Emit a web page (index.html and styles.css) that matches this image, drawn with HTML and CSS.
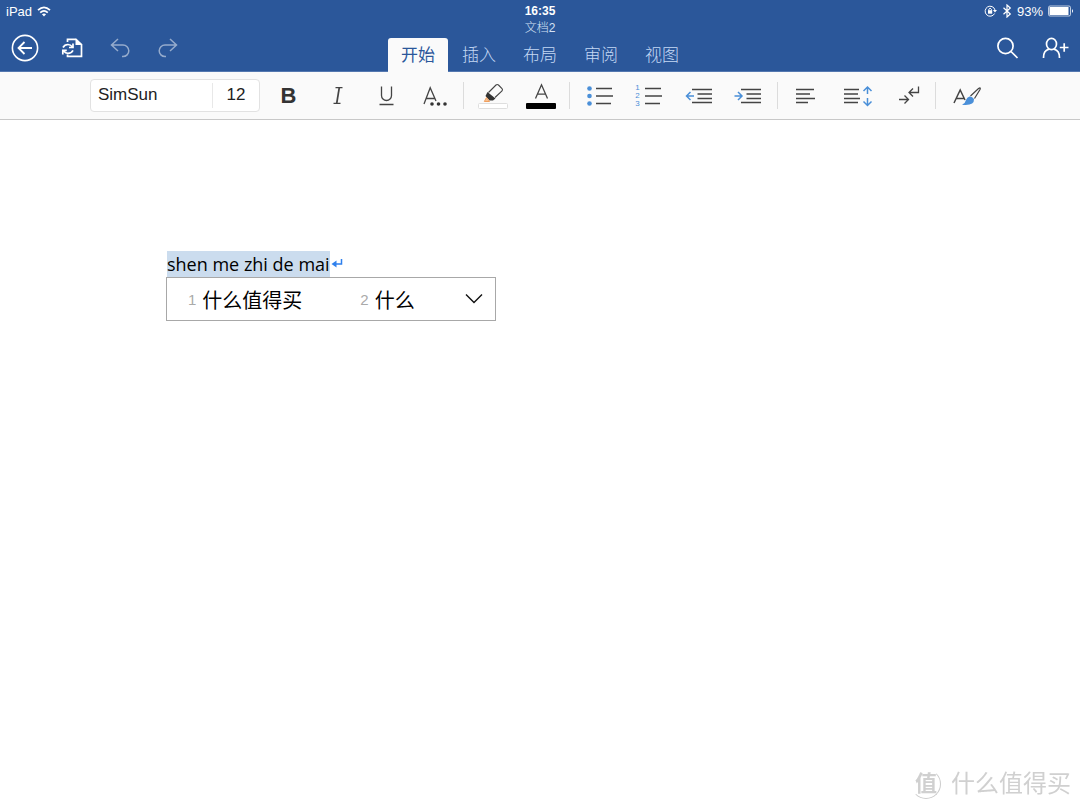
FILE: index.html
```html
<!DOCTYPE html>
<html lang="zh-CN">
<head>
<meta charset="utf-8">
<meta name="viewport" content="width=device-width, initial-scale=1">
<title>文档2</title>
<link rel="stylesheet" href="styles.css">
</head>
<body>
<header class="header">
  <div class="side">
    <div class="status">
      <span>iPad</span>
      <svg width="14" height="11" viewBox="0 0 14 11" fill="none" stroke="#fff" stroke-width="1.7"><path d="M1 4.2Q7-1.6 13 4.2M3.2 6.6Q7 3 10.800 6.600"/><path d="M7 10.500L4.900 8.300Q7 6.500 9.100 8.300Z" fill="#fff" stroke="none"/></svg>
    </div>
    <div class="actions">
      <button class="action" aria-label="返回"><svg width="28" height="28" viewBox="0 0 28 28" fill="none" stroke="#fff" stroke-width="1.6"><circle cx="14" cy="14" r="12.600"/><path d="M21 14H8M13.500 8L7.500 14L13.500 20" stroke-width="1.800"/></svg></button>
      <button class="action" aria-label="文件"><svg width="24" height="24" viewBox="0 0 24 24" fill="none" stroke="#fff" stroke-width="1.700"><path d="M6.500 6V3.300H15L20.500 8.500V20.300H6.500V18.500"/><path d="M14.500 2.500V9H21.300Z" fill="#fff" stroke="none"/><path d="M2 11.500Q3.500 8.500 7 8.500Q9.500 8.500 11.500 11M12 7.500V11.500H8M12 14.300Q10.500 17.300 7 17.300Q4.500 17.300 2.500 15M1.800 18.500V14.400H5.800"/></svg></button>
      <button class="action faded" aria-label="撤消"><svg width="22" height="22" viewBox="0 0 22 22" fill="none" stroke="#fff" stroke-width="1.500"><path d="M8 2L1.500 8L8 14M1.500 8H13A5.600 5.600 0 0 1 13 19.600H12"/></svg></button>
      <button class="action faded" aria-label="恢复"><svg width="22" height="22" viewBox="0 0 22 22" fill="none" stroke="#fff" stroke-width="1.500"><path d="M12 2L18.500 8L12 14M18.500 8H7A5.600 5.600 0 0 0 7 19.600H8"/></svg></button>
    </div>
  </div>
  <div class="middle">
    <div class="time">16:35</div>
    <div class="name">文档2</div>
    <nav class="tabs">
      <button class="tab active">开始</button>
      <button class="tab">插入</button>
      <button class="tab">布局</button>
      <button class="tab">审阅</button>
      <button class="tab">视图</button>
    </nav>
  </div>
  <div class="side right">
    <div class="status">
      <svg width="13" height="12" viewBox="0 0 13 12" fill="none" stroke="#fff"><path d="M10.600 8.500A5 5 0 1 1 11 5"/><path d="M8.900 5H13L11 7.500Z" fill="#fff" stroke="none"/><path d="M4 5.200H8.200V8.700H4Z" fill="#fff" stroke="none"/><path d="M4.800 5.500V4.300Q6.100 2 7.400 4.300V5.500"/></svg>
      <svg width="10" height="14" viewBox="0 0 10 14" fill="none" stroke="#fff" stroke-width="1.200"><path d="M1.500 3.800L8.300 10L5 13V1L8.300 4L1.500 10.200"/></svg>
      <span>93%</span>
      <svg width="26" height="12" viewBox="0 0 26 12"><rect x=".5" y="1" width="22" height="10" rx="1.500" fill="none" stroke="#fff" stroke-opacity=".7"/><rect x="1.500" y="2" width="19" height="8" fill="#fff"/><path d="M24 4Q26 6 24 8Z" fill="#fff"/></svg>
    </div>
    <div class="actions">
      <button class="action" aria-label="搜索"><svg width="24" height="24" viewBox="0 0 24 24" fill="none" stroke="#fff" stroke-width="1.700"><circle cx="10.500" cy="10" r="7.600"/><path d="M16 15.500L22.500 22"/></svg></button>
      <button class="action" aria-label="共享"><svg width="28" height="24" viewBox="0 0 28 24" fill="none" stroke="#fff" stroke-width="1.700"><ellipse cx="10.500" cy="8" rx="5" ry="5.700"/><path d="M2.500 22Q2.300 14.500 8 13.200M18.500 22Q18.700 14.500 13 13.200M18.800 11.500H27.500M23.200 7.200V15.800"/></svg></button>
    </div>
  </div>
</header>

<div class="toolbar" role="toolbar" aria-label="开始">
  <div class="font">
    <button class="font-name">SimSun</button>
    <button class="font-size">12</button>
  </div>
  <div class="group">
    <button class="tool bold" aria-label="加粗">B</button>
    <button class="tool" aria-label="倾斜"><svg class="ico" viewBox="0 0 32 32"><path d="M13.500 7.700H20.500M11.500 23.300H18.500" stroke-width="1.200"/><path d="M17.300 7.500L14.700 23.500" stroke-width="1.700"/></svg></button>
    <button class="tool" aria-label="下划线"><svg class="ico" viewBox="0 0 32 32"><path d="M10.500 6.500V15.500A5 5 0 0 0 20.500 15.500V6.500M8.500 24.500H22.500" stroke-width="1.300"/></svg></button>
    <button class="tool" aria-label="更多格式"><svg class="ico" viewBox="0 0 32 32"><path d="M4 24L10.200 7.700L16 21M6.300 18.500H14.700" stroke-width="1.300"/><g fill="#333" stroke="none"><circle cx="12" cy="24" r="1.800"/><circle cx="18.500" cy="24" r="1.800"/><circle cx="25" cy="24" r="1.800"/></g></svg></button>
  </div>
  <div class="group">
    <button class="tool" aria-label="突出显示"><svg class="ico" viewBox="0 0 32 32"><path d="M11.500 12.500L19 5Q20.200 4 21.500 5L25 8.500Q26 9.700 25 11L18 17.500" stroke-width="1.100"/><path d="M10.500 12L18.500 18.500L16 20.500L12.500 20.500L8.500 16Z" fill="#333" stroke="none"/><path d="M9.500 17.500L7.300 21.500H12.500Z" fill="#f8c090" stroke="#f0a060" stroke-width="1"/><rect x="1.500" y="23.500" width="29" height="5" rx="1" fill="#fff" stroke="#dedede" stroke-width="1"/></svg></button>
    <button class="tool" aria-label="字体颜色"><svg class="ico" viewBox="0 0 32 32"><path d="M9.500 18.500L15.500 4.800L21.500 18.500M11.500 14.200H19.500" stroke-width="1.300"/><rect x="0" y="23" width="30" height="6" rx="1" fill="#000" stroke="none"/></svg></button>
  </div>
  <div class="group wide">
    <button class="tool" aria-label="项目符号"><svg class="ico" viewBox="0 0 32 32"><g fill="#4a8fd8" stroke="none"><circle cx="6.500" cy="8.500" r="2.300"/><circle cx="6.500" cy="16" r="2.300"/><circle cx="6.500" cy="23.500" r="2.300"/></g><path d="M13 8.500H29M13 16H30M13 23.500H28"/></svg></button>
    <button class="tool numbers" aria-label="编号"><span class="digits"><span>1</span><span>2</span><span>3</span></span><svg width="18" height="32" viewBox="0 0 18 32"><path d="M0 8.500H16M0 16H17M0 23.500H15"/></svg></button>
    <button class="tool" aria-label="减少缩进"><svg class="ico" viewBox="0 0 32 32"><path d="M9 9.500H29M14.500 14H29M14.500 18.500H29M9 22.500H29"/><path class="blue" d="M11 16H3.500M7.500 12L3.500 16L7.500 20"/></svg></button>
    <button class="tool" aria-label="增加缩进"><svg class="ico" viewBox="0 0 32 32"><path d="M8 9.500H28M13.500 14H28M13.500 18.500H28M8 22.500H28"/><path class="blue" d="M1.500 16H9M5 12L9 16L5 20"/></svg></button>
  </div>
  <div class="group wide">
    <button class="tool" aria-label="对齐"><svg class="ico" viewBox="0 0 32 32"><path d="M5 9.500H23M5 14H19M5 18.500H24M5 22.500H17"/></svg></button>
    <button class="tool" aria-label="行距"><svg class="ico" viewBox="0 0 32 32"><path d="M3 9.500H18M3 14H17M3 18.500H19M3 22.500H17"/><path class="blue" d="M26.500 14V7M22.500 11L26.500 7L30.500 11M26.500 18V25.500M22.500 21.500L26.500 25.500L30.500 21.500"/></svg></button>
    <button class="tool" aria-label="段落标记"><svg class="ico" viewBox="0 0 32 32"><path d="M8 19.500H17.500M13.500 15.500L17.500 19.500L13.500 23.500M27.500 6.500V12.500H18M22 8.500L18 12.500L22 16.500" stroke-width="1.300"/></svg></button>
  </div>
  <div class="group wide">
    <button class="tool" aria-label="样式"><svg class="ico" viewBox="0 0 32 32"><path d="M5 23L11.200 10L16 20M7.300 18.500H15"/><path d="M21.500 16L29.500 8.500Q32 7 31 9.500L25.500 18.500" stroke-width="1.200"/><path d="M20.500 16.500Q23 16 25 19Q25.500 26 13 24.700Q16.500 23 17 20Q18 17 20.500 16.500Z" fill="#4a8fd8" stroke="none"/></svg></button>
  </div>
</div>

<main class="page">
  <p class="line"><span class="composing">shen me zhi de mai</span><svg width="12" height="12" viewBox="0 0 12 12" fill="none" stroke="#2f80ed" stroke-width="1.500"><path d="M10.500 1V6H4"/><path d="M0.500 6L5.500 2.500V9.500Z" fill="#2f80ed" stroke="none"/></svg></p>
  <div class="candidates">
    <button class="candidate"><span class="index">1</span>什么值得买</button>
    <button class="candidate"><span class="index">2</span>什么</button>
    <button class="more" aria-label="更多候选"><svg width="18" height="12" viewBox="0 0 18 12" fill="none" stroke="#111" stroke-width="1.400"><path d="M1 1.500L9 9.500L17 1.500"/></svg></button>
  </div>
</main>

<div class="watermark"><span class="seal">值</span><span>什么值得买</span></div>
</body>
</html>
```
FILE: styles.css
```css
* { box-sizing: border-box; }

body {
  margin: 0;
  min-height: 100vh;
  display: flex;
  flex-direction: column;
  background: #fff;
  color: #000;
  font-family: "Liberation Sans", "Noto Sans CJK SC", sans-serif;
}

button {
  margin: 0;
  padding: 0;
  border: 0;
  background: none;
  color: inherit;
  font: inherit;
}

svg { display: block; flex: none; }

.header {
  display: grid;
  grid-template-columns: 1fr auto 1fr;
  background: #2b579a;
  border-bottom: 1px solid #5478b0;
  color: #fff;
}

.side { padding: 0 6px; }

.status {
  display: flex;
  align-items: center;
  gap: 5px;
  height: 22px;
  font-size: 13px;
}

.actions {
  display: flex;
  align-items: center;
  gap: 10px;
  height: 49px;
  padding-top: 3px;
}

.action {
  display: grid;
  place-items: center;
  width: 38px;
  height: 38px;
}

.faded { opacity: .5; }

.right .status, .right .actions { justify-content: flex-end; }

.middle {
  display: flex;
  flex-direction: column;
  align-items: center;
}

.time {
  padding-top: 3px;
  font-size: 12px;
  font-weight: bold;
  line-height: 16px;
}

.name {
  color: #d5e2f5;
  font-size: 12px;
  font-weight: 300;
  line-height: 18px;
}

.tabs {
  display: flex;
  gap: 1px;
  margin-top: auto;
  margin-bottom: -1px;
}

.tab {
  width: 60px;
  height: 34px;
  padding-bottom: 3px;
  border-radius: 3px 3px 0 0;
  color: #c5d9f5;
  font-size: 17px;
  font-weight: 300;
}

.active {
  background: #fafafa;
  color: #2b579a;
  font-weight: 400;
}

.toolbar {
  display: flex;
  align-items: center;
  height: 48px;
  padding: 0 90px;
  background: #fafafa;
  border-bottom: 1px solid #c8c8c8;
  color: #333;
}

.font {
  display: flex;
  width: 170px;
  height: 33px;
  margin-right: 4px;
  padding: 3px 0;
  background: #fff;
  border: 1px solid #e2e2e2;
  border-radius: 4px;
  color: #222;
  font-size: 17px;
}

.font-name {
  flex: 1;
  padding: 0 0 2px 7px;
  border-right: 1px solid #e8e8e8;
  text-align: left;
}

.font-size { width: 46px; padding-bottom: 2px; }

.group { display: flex; align-items: center; }

.group + .group::before {
  content: "";
  width: 1px;
  height: 27px;
  margin: 0 4px 0 3px;
  background: #dcdcdc;
}

.tool {
  display: flex;
  align-items: center;
  justify-content: center;
  width: 49px;
  height: 40px;
}

.wide .tool { width: 50px; }

.tool svg {
  fill: none;
  stroke: #444;
  stroke-width: 1.5;
}

.ico { width: 32px; height: 32px; }
.tool .blue { stroke: #4a8fd8; }

.bold { font-size: 22px; font-weight: bold; }

.numbers { gap: 5px; }

.digits {
  display: grid;
  color: #4a8fd8;
  font-size: 8px;
  line-height: 8px;
}

.page {
  flex: 1;
  padding: 131px 166px 0;
}

.line {
  display: flex;
  align-items: center;
  gap: 1px;
  margin: 0;
  padding-left: 1px;
  font-family: "Open Sans", sans-serif;
  font-size: 18px;
  line-height: 26px;
}

.composing { background: #cbdcee; }

.candidates {
  display: flex;
  align-items: center;
  width: fit-content;
  height: 44px;
  padding: 0 12px 0 21px;
  border: 1px solid #a8a8a8;
  background: #fff;
}

.candidate {
  display: flex;
  align-items: center;
  gap: 6px;
  margin-right: 58px;
  font-size: 20px;
}

.candidate + .candidate { margin-right: 50px; }

.index { color: #aaa; font-size: 15px; }

.watermark {
  position: fixed;
  right: 9px;
  bottom: 9px;
  display: flex;
  align-items: center;
  gap: 10px;
  color: #d0d0d0;
  font-size: 24px;
  line-height: 34px;
}

.seal {
  display: grid;
  place-items: center;
  width: 30px;
  height: 30px;
  border: 1px solid transparent;
  border-right-color: #ccc;
  border-bottom-color: #ccc;
  border-radius: 50%;
  font-size: 22px;
  line-height: 28px;
  font-weight: bold;
}
```
